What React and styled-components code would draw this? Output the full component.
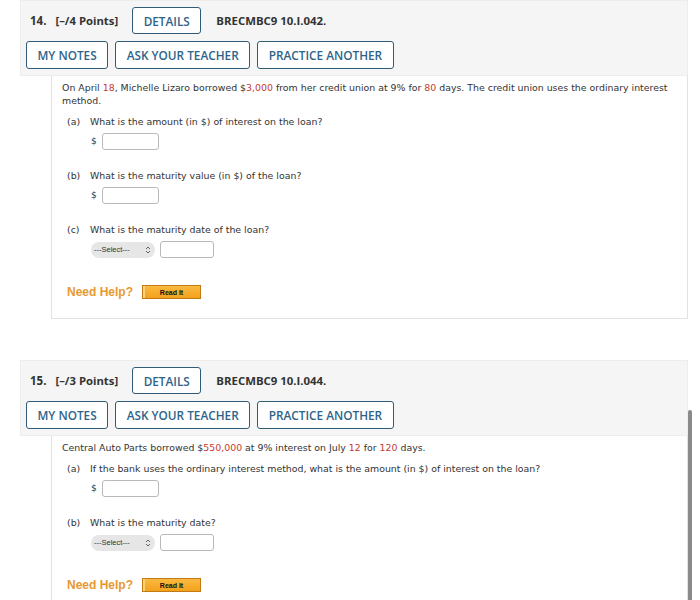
import React from "react";
import styled, { createGlobalStyle } from "styled-components";

const GlobalStyle = createGlobalStyle`
  html, body {
    margin: 0;
    padding: 0;
    background: #ffffff;
    overflow: hidden;
  }
`;

const Page = styled.div`
  width: 668px;
  padding-left: 20px;
`;

const Question = styled.div`
  margin-bottom: ${(props) => props.gap || "0"};
`;

const Header = styled.div`
  background: #f5f5f5;
  border: 1px solid #ededed;
  padding: 6px 5px 6px 5px;
  font-family: "Open Sans", "Liberation Sans", sans-serif;
`;

const HeaderRow = styled.div`
  display: flex;
  align-items: center;
  gap: 7px;
  margin-top: ${(props) => props.top || "0"};
`;

const Number = styled.span`
  font-weight: 700;
  font-size: 11.5px;
  color: #333;
  margin-left: 4px;
  margin-right: 2px;
`;

const Points = styled.span`
  font-weight: 700;
  font-size: 11.3px;
  color: #333;
  margin-right: 7px;
`;

const Code = styled.span`
  font-weight: 700;
  font-size: 11.4px;
  color: #333;
  margin-left: 8px;
`;

const Button = styled.button`
  box-sizing: border-box;
  height: ${(props) => props.h || "28px"};
  padding: 0 ${(props) => props.px || "10.5px"};
  background: #ffffff;
  border: 1.5px solid #2f5b76;
  border-radius: 3px;
  color: #2e6489;
  font-family: "Open Sans", "Liberation Sans", sans-serif;
  font-weight: 600;
  font-size: 11.8px;
  cursor: pointer;
`;

const Body = styled.div`
  margin-left: 31px;
  border: 1px solid #e2e2e2;
  border-top: none;
  padding: 5px 10px 19px 10px;
  font-family: "DejaVu Sans", Verdana, sans-serif;
  font-size: 9.4px;
  line-height: 13px;
  color: #333;
`;

const Intro = styled.p`
  margin: 0 0 8px 0;
  padding-right: 2px;
`;

const Red = styled.span`
  color: #c43a32;
`;

const Part = styled.div`
  display: grid;
  grid-template-columns: 23px 1fr;
  margin-left: 5px;
  margin-bottom: 19px;
`;

const PartLabel = styled.span``;

const PartBody = styled.div`
  display: flex;
  flex-direction: column;
  gap: 5px;
`;

const AnswerRow = styled.div`
  display: flex;
  align-items: center;
  gap: 5px;
  margin-left: 1px;
`;

const Dollar = styled.span`
  font-size: 9px;
`;

const TextBox = styled.div`
  box-sizing: border-box;
  width: ${(props) => props.w || "57px"};
  height: 17px;
  border: 1px solid #b9b9b9;
  border-radius: 3px;
  background: #fff;
`;

const Select = styled.div`
  box-sizing: border-box;
  width: 64px;
  height: 16px;
  border-radius: 8px;
  background: #e6e6e6;
  display: flex;
  align-items: center;
  justify-content: space-between;
  padding: 0 4px 0 3px;
  font-family: "Liberation Sans", Arial, sans-serif;
  font-size: 7.5px;
  color: #333;
`;

const Help = styled.div`
  display: flex;
  align-items: center;
  gap: 9px;
  margin-left: 5px;
  margin-top: 27px;
`;

const NeedHelp = styled.span`
  font-family: "Liberation Sans", Arial, sans-serif;
  font-weight: 700;
  font-size: 12px;
  color: #e6992f;
`;

const ReadIt = styled.span`
  box-sizing: border-box;
  width: 59px;
  height: 14px;
  display: flex;
  align-items: center;
  justify-content: center;
  background: linear-gradient(#fbb940, #f3a11d);
  border: 1px solid #c27a14;
  box-shadow: inset 2px 0 0 #ffd27a;
  font-family: "Liberation Sans", Arial, sans-serif;
  font-weight: 700;
  font-size: 7px;
  color: #111;
`;

const ScrollThumb = styled.div`
  position: fixed;
  right: 8px;
  top: 410px;
  width: 4px;
  height: 192px;
  border-radius: 2px;
  background: #8a8a8a;
`;

const Arrows = () => (
  <svg width="6" height="8" viewBox="0 0 6 8">
    <path d="M1 3 L3 1 L5 3 M1 5 L3 7 L5 5" fill="none" stroke="#555" strokeWidth="0.9" />
  </svg>
);

function QuestionHeader({ num, points, code }) {
  return (
    <Header>
      <HeaderRow>
        <Number>{num}.</Number>
        <Points>[–/{points} Points]</Points>
        <Button h="27px">DETAILS</Button>
        <Code>{code}</Code>
      </HeaderRow>
      <HeaderRow top="7px">
        <Button>MY NOTES</Button>
        <Button>ASK YOUR TEACHER</Button>
        <Button>PRACTICE ANOTHER</Button>
      </HeaderRow>
    </Header>
  );
}

function DateAnswer() {
  return (
    <AnswerRow>
      <Select>
        <span>---Select---</span>
        <Arrows />
      </Select>
      <TextBox w="54px" />
    </AnswerRow>
  );
}

function MoneyAnswer() {
  return (
    <AnswerRow>
      <Dollar>$</Dollar>
      <TextBox />
    </AnswerRow>
  );
}

function HelpRow() {
  return (
    <Help>
      <NeedHelp>Need Help?</NeedHelp>
      <ReadIt>Read It</ReadIt>
    </Help>
  );
}

export default function App() {
  return (
    <Page>
      <GlobalStyle />
      <Question gap="41px">
        <QuestionHeader num="14" points="4" code="BRECMBC9 10.I.042." />
        <Body>
          <Intro>
            On April <Red>18</Red>, Michelle Lizaro borrowed $<Red>3,000</Red> from her credit union at 9% for{" "}
            <Red>80</Red> days. The credit union uses the ordinary interest method.
          </Intro>
          <Part>
            <PartLabel>(a)</PartLabel>
            <PartBody>
              <span>What is the amount (in $) of interest on the loan?</span>
              <MoneyAnswer />
            </PartBody>
          </Part>
          <Part>
            <PartLabel>(b)</PartLabel>
            <PartBody>
              <span>What is the maturity value (in $) of the loan?</span>
              <MoneyAnswer />
            </PartBody>
          </Part>
          <Part>
            <PartLabel>(c)</PartLabel>
            <PartBody>
              <span>What is the maturity date of the loan?</span>
              <DateAnswer />
            </PartBody>
          </Part>
          <HelpRow />
        </Body>
      </Question>
      <Question>
        <QuestionHeader num="15" points="3" code="BRECMBC9 10.I.044." />
        <Body>
          <Intro>
            Central Auto Parts borrowed $<Red>550,000</Red> at 9% interest on July <Red>12</Red> for <Red>120</Red> days.
          </Intro>
          <Part>
            <PartLabel>(a)</PartLabel>
            <PartBody>
              <span>If the bank uses the ordinary interest method, what is the amount (in $) of interest on the loan?</span>
              <MoneyAnswer />
            </PartBody>
          </Part>
          <Part>
            <PartLabel>(b)</PartLabel>
            <PartBody>
              <span>What is the maturity date?</span>
              <DateAnswer />
            </PartBody>
          </Part>
          <HelpRow />
        </Body>
      </Question>
      <ScrollThumb />
    </Page>
  );
}
